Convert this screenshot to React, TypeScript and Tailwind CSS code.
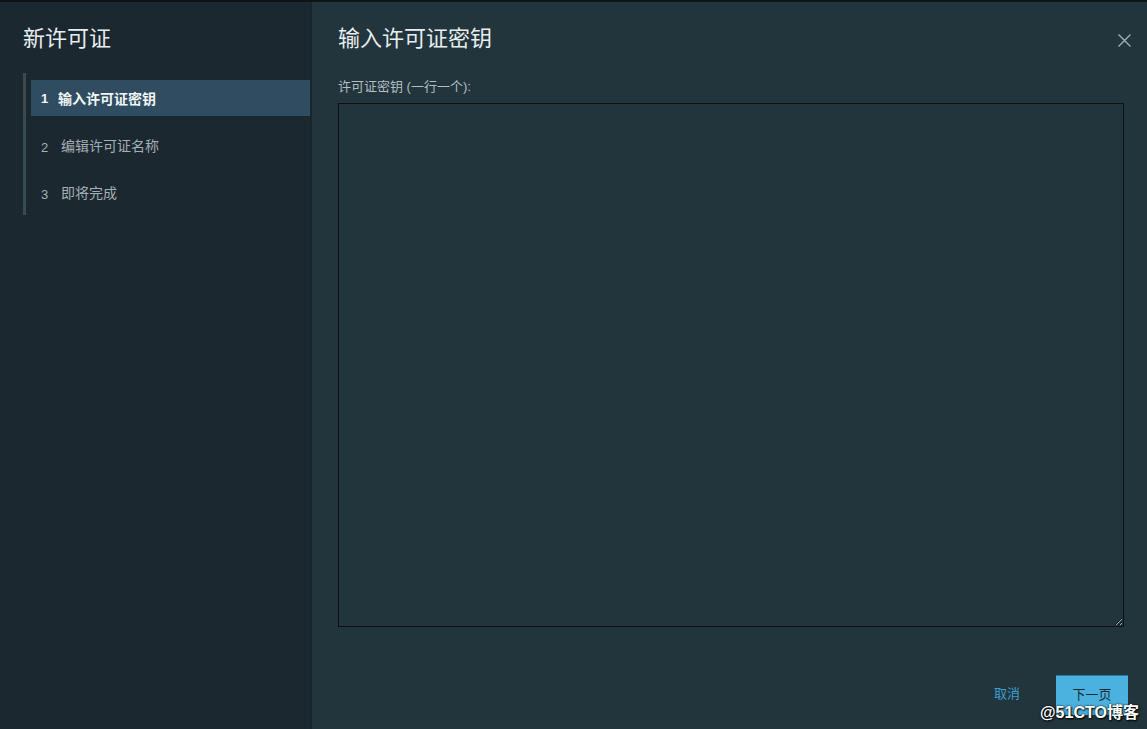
import React from "react";

const font = { fontFamily: '"Liberation Sans", "Noto Sans CJK SC", sans-serif' };

export default function App() {
  return (
    <div
      className="relative w-[1147px] h-[729px] overflow-hidden flex flex-col bg-[#1c2830]"
      style={font}
    >
      <div className="h-[2px] bg-[#0d151a] shrink-0" />
      <div className="flex flex-1 min-h-0">
        {/* Left panel */}
        <div className="w-[310px] shrink-0 bg-[#1c2830] flex flex-col">
          <div className="pl-[23px] pt-[21px] text-[22px] leading-[32px] text-[#e8eef0]">新许可证</div>
          <div className="mt-[18px] ml-[23px] flex">
            <div className="w-[3px] h-[142px] bg-[#3a4a52]" />
            <div className="flex-1 pl-[5px] pt-[7px] flex flex-col">
              <div className="h-[36px] bg-[#2f4c60] flex items-center pl-[10px] pt-[2px] text-[14px] font-bold text-[#f2f5f6]">
                <span className="w-[17px] text-[13px]">1</span>
                <span>输入许可证密钥</span>
              </div>
              <div className="h-[47px] flex items-end pb-[6px] pl-[10px] text-[14px] text-[#a3afb5]">
                <span className="w-[20px] text-[13px]">2</span>
                <span>编辑许可证名称</span>
              </div>
              <div className="h-[47px] flex items-end pb-[6px] pl-[10px] text-[14px] text-[#a3afb5]">
                <span className="w-[20px] text-[13px]">3</span>
                <span>即将完成</span>
              </div>
            </div>
          </div>
        </div>
        <div className="w-[2px] bg-[#1a262c]" />
        {/* Right panel */}
        <div className="flex-1 bg-[#22353c] flex flex-col pl-[26px] pr-[20px]">
          <div className="flex items-start justify-between pt-[21px]">
            <div className="text-[22px] leading-[32px] text-[#e8eef0]">输入许可证密钥</div>
            <svg width="15" height="15" viewBox="0 0 15 15" className="mt-[10px] mr-[-5px]">
              <path d="M1.5 1.5 L13.5 13.5 M13.5 1.5 L1.5 13.5" stroke="#a2afb5" strokeWidth="1.4" />
            </svg>
          </div>
          <div className="mt-[23px] text-[13px] leading-[17px] text-[#b3bec3]">许可证密钥 (一行一个):</div>
          <textarea
            className="mt-[8px] w-[786px] h-[524px] bg-[#22353c] border border-[#0a1216] outline-none resize-y text-[#dfe6e9] text-[13px] p-2"
          />
          <div className="flex justify-end items-center mt-[48px] mr-[-1px]">
            <span className="text-[13px] text-[#3f9fd0] mr-[36px] mb-[2px]">取消</span>
            <div className="w-[72px] h-[40px] bg-[#4bb1df] border-t border-[#2f7aa0] flex items-center justify-center pb-[2px] text-[13px] text-[#1c2b33]">
              下一页
            </div>
          </div>
        </div>
      </div>
      <div
        className="absolute left-[1040px] top-[701px] text-[16px] text-white font-bold"
        style={{ textShadow: "0 0 2px #000, 1px 1px 2px #000" }}
      >
        @51CTO博客
      </div>
    </div>
  );
}
